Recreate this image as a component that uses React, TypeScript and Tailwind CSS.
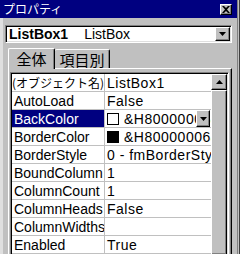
import React from "react";

type Row = {
    name: string;
    value: string;
    swatch?: "white" | "black";
    selected?: boolean;
    dropdown?: boolean;
    jp?: boolean;
};

const ROWS: Row[] = [
    { name: "(オブジェクト名)", value: "ListBox1", jp: true },
    { name: "AutoLoad", value: "False" },
    { name: "BackColor", value: "&H80000005&", swatch: "white", selected: true, dropdown: true },
    { name: "BorderColor", value: "&H80000006&", swatch: "black" },
    { name: "BorderStyle", value: "0 - fmBorderStyleNone" },
    { name: "BoundColumn", value: "1" },
    { name: "ColumnCount", value: "1" },
    { name: "ColumnHeads", value: "False" },
    { name: "ColumnWidths", value: "" },
    { name: "Enabled", value: "True" },
    { name: "Font", value: "MS UI Gothic" },
];

const raised =
    "border border-t-white border-l-white border-r-black border-b-black shadow-[inset_-1px_-1px_0_#808080]";
const sunken =
    "border border-t-[#808080] border-l-[#808080] border-r-white border-b-white shadow-[inset_1px_1px_0_#000,inset_-1px_-1px_0_#dfdfdf]";

function DownArrow() {
    return (
        <svg width="7" height="4" viewBox="0 0 7 4" className="block">
            <path d="M0 0h7L3.5 4z" fill="#000" />
        </svg>
    );
}

export default function App() {
    return (
        <div className="w-[240px] h-[254px] overflow-hidden bg-[#c0c0c0] flex font-['Liberation_Sans','Noto_Sans_CJK_JP',sans-serif] text-black">
            {/* Window */}
            <div className="w-[237px] flex flex-col shrink-0">
                {/* Title bar */}
                <div className="h-[18px] bg-[#000080] flex items-center justify-between pl-[3px] pr-[5px]">
                    <span className="text-white text-[12px] leading-none font-['Noto_Sans_CJK_JP',sans-serif]">
                        プロパティ
                    </span>
                    <div className={`w-[12px] h-[11px] bg-[#c0c0c0] flex items-center justify-center ${raised}`}>
                        <svg width="8" height="7" viewBox="0 0 8 7" className="block">
                            <path d="M0 0h2l2 2 2-2h2L5 3.5 8 7H6L4 5 2 7H0l3-3.5z" fill="#000" />
                        </svg>
                    </div>
                </div>

                {/* Body */}
                <div className="flex-1 flex flex-col border-l-[3px] border-[#dfdfdf] pl-[2px] pr-[5px] pt-[7px] min-h-0">
                    {/* Object combo */}
                    <div className={`h-[18px] bg-white flex items-center ${sunken}`}>
                        <div className="flex-1 flex items-center pl-[3px] text-[14px] leading-none whitespace-nowrap overflow-hidden">
                            <span className="font-bold">ListBox1</span>
                            <span className="ml-[16px]">ListBox</span>
                        </div>
                        <div className={`w-[15px] h-[14px] mr-[1px] bg-[#c0c0c0] flex items-center justify-center ${raised}`}>
                            <DownArrow />
                        </div>
                    </div>

                    {/* Tabs */}
                    <div className="mt-[5px] ml-[3px] h-[20px] flex items-end relative z-10 font-['Noto_Sans_CJK_JP',sans-serif] text-[15px] leading-none">
                        <div className="w-[47px] h-[21px] -mb-[1px] bg-[#c0c0c0] border-t border-l border-white border-r border-r-black rounded-t-[2px] shadow-[inset_-1px_0_0_#808080] flex items-center justify-center pb-[1px]">
                            全体
                        </div>
                        <div className="w-[55px] h-[19px] bg-[#c0c0c0] border-t border-white border-r border-r-black rounded-t-[2px] shadow-[inset_-1px_0_0_#808080] flex items-center justify-center">
                            項目別
                        </div>
                    </div>

                    {/* Tab panel */}
                    <div className="ml-[3px] flex-1 min-h-0 border-t border-l border-white border-r border-r-black shadow-[inset_-1px_0_0_#808080] pt-[3px] pl-[1px] pr-[2px]">
                        {/* Property grid */}
                        <div className={`h-full flex ${sunken} border-b-0 p-[1px] pb-0`}>
                            <div className="flex-1 min-w-0 flex flex-col bg-white">
                                {ROWS.map((row) => (
                                    <div key={row.name} className="h-[18px] shrink-0 flex border-b border-[#c0c0c0] text-[14px] leading-none">
                                        <div
                                            className={`w-[93px] shrink-0 flex items-center whitespace-nowrap overflow-hidden border-r border-[#c0c0c0] ${
                                                row.selected ? "bg-[#000080] text-white" : ""
                                            } ${row.jp ? "text-[12px] font-['Noto_Sans_CJK_JP',sans-serif]" : "pl-[2px]"}`}
                                        >
                                            {row.name}
                                        </div>
                                        <div className="flex-1 min-w-0 flex items-center pl-[2px] whitespace-nowrap overflow-hidden relative tracking-[0.5px]">
                                            {row.swatch && (
                                                <span
                                                    className={`w-[12px] h-[12px] shrink-0 border border-black mr-[5px] ${
                                                        row.swatch === "white" ? "bg-white" : "bg-black"
                                                    }`}
                                                />
                                            )}
                                            <span>{row.value}</span>
                                            {row.dropdown && (
                                                <div className={`absolute right-[1px] top-0 w-[14px] h-[17px] bg-[#c0c0c0] flex items-center justify-center ${raised}`}>
                                                    <DownArrow />
                                                </div>
                                            )}
                                        </div>
                                    </div>
                                ))}
                            </div>
                            {/* Scrollbar */}
                            <div className="w-[16px] shrink-0 flex flex-col bg-[#c0c0c0]">
                                <div className={`h-[16px] shrink-0 bg-[#c0c0c0] flex items-center justify-center ${raised}`}>
                                    <svg width="7" height="4" viewBox="0 0 7 4" className="block">
                                        <path d="M3.5 0L7 4H0z" fill="#000" />
                                    </svg>
                                </div>
                                <div className={`flex-1 bg-[#c0c0c0] ${raised} border-b-0`} />
                            </div>
                        </div>
                    </div>
                </div>
            </div>

            {/* Right edge */}
            <div className="flex-1 border-l border-[#808080] flex">
                <div className="flex-1" />
                <div className="w-[1px] bg-[#404040]" />
            </div>
        </div>
    );
}
